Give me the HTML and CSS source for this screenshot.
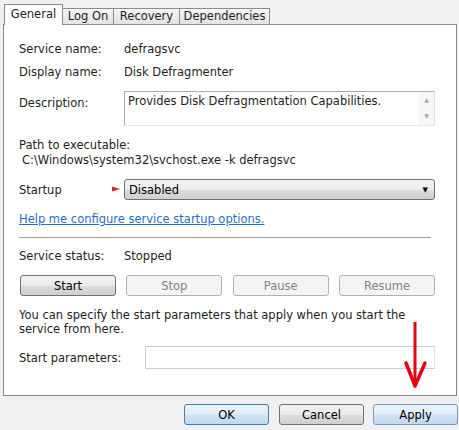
FILE: index.html
```html
<!DOCTYPE html>
<html lang="en">
<head>
  <meta charset="UTF-8">
  <title>Disk Defragmenter Properties</title>
  <link rel="stylesheet" href="styles.css">
</head>
<body>
  <div class="dialog">
    <div class="tabs">
      <span class="tab active">General</span>
      <span class="tab tabLogOn">Log On</span>
      <span class="tab tabRecovery">Recovery</span>
      <span class="tab tabDeps">Dependencies</span>
    </div>

    <div class="panel">
      <div class="row"><span class="label">Service name:</span><span>defragsvc</span></div>
      <div class="row gap9"><span class="label">Display name:</span><span>Disk Defragmenter</span></div>
      <div class="row descRow">
        <span class="label descLabel">Description:</span>
        <div class="descBox">
          <span class="descText">Provides Disk Defragmentation Capabilities.</span>
          <div class="scroll"><span>&#9650;</span><span>&#9660;</span></div>
        </div>
      </div>
      <div class="pathLabel">Path to executable:</div>
      <div class="pathValue">C:\Windows\system32\svchost.exe -k defragsvc</div>
      <div class="row startupRow">
        <span class="label">Startup</span>
        <div class="select"><span>Disabled</span><span class="caret">&#9660;</span></div>
      </div>
      <a class="link" href="#">Help me configure service startup options.</a>
      <div class="rule"></div>
      <div class="row statusRow"><span class="label">Service status:</span><span>Stopped</span></div>
      <div class="actions">
        <button class="btn">Start</button>
        <button class="btn" disabled>Stop</button>
        <button class="btn" disabled>Pause</button>
        <button class="btn" disabled>Resume</button>
      </div>
      <p class="note">You can specify the start parameters that apply when you start the service from here.</p>
      <div class="row paramRow">
        <span class="label paramLabel">Start parameters:</span>
        <div class="paramInput"></div>
      </div>
    </div>

    <div class="footer">
      <button class="btn btnBlue okBtn">OK</button>
      <button class="btn">Cancel</button>
      <button class="btn btnBlue applyBtn">Apply</button>
    </div>

    <!-- red annotation arrows drawn over the screenshot -->
    <svg class="arrows" width="459" height="430" viewBox="0 0 459 430">
      <defs>
        <linearGradient id="fade" x1="0" x2="1" y1="0" y2="0">
          <stop offset="0" stop-color="#f08a95"/>
          <stop offset="1" stop-color="#e51e30"/>
        </linearGradient>
      </defs>
      <line x1="97" y1="189" x2="116" y2="189" stroke="url(#fade)" stroke-width="1.6"/>
      <path d="M112 186.5 L120 189 L112 191.5 Z" fill="#e51e30"/>
      <line x1="415" y1="322" x2="415" y2="382" stroke="#e30613" stroke-width="3"/>
      <path d="M406 363 L415 386 L425 363" fill="none" stroke="#e30613" stroke-width="3.5" stroke-linejoin="round" stroke-linecap="round"/>
    </svg>
  </div>
</body>
</html>
```

FILE: styles.css
```css
body {
  margin: 0;
  background: #f0f0f0;
  font: 11.5px "DejaVu Sans", sans-serif;
  color: #1e1e1e;
}
.dialog {
  position: relative;
  width: 459px;
  height: 430px;
  overflow: hidden;
}
.tabs {
  display: flex;
  align-items: flex-end;
  height: 24px;
  padding-left: 4px;
}
.tab {
  box-sizing: border-box;
  height: 16px;
  line-height: 15px;
  text-align: center;
  border: 1px solid #898c95;
  border-left: none;
  border-bottom: none;
  background: linear-gradient(#f5f5f5, #e3e3e3);
}
.tab.active {
  position: relative;
  z-index: 1;
  width: 59px;
  height: 21px;
  line-height: 18px;
  margin-bottom: -1px;
  border-left: 1px solid #898c95;
  background: #fff;
}
.tabLogOn { width: 51px; }
.tabRecovery { width: 66px; }
.tabDeps { width: 90px; }

.panel {
  box-sizing: border-box;
  width: 454px;
  height: 372px;
  margin-left: 3px;
  padding: 17px 0 0 15px;
  border: 1px solid #898c95;
  background: #fff;
  line-height: 14px;
}
.row {
  display: flex;
  align-items: center;
}
.label {
  width: 105px;
  flex: none;
}
.gap9 { margin-top: 9px; }
.descRow {
  margin-top: 12px;
  align-items: flex-start;
}
.descLabel { padding-top: 5px; }
.descBox {
  box-sizing: border-box;
  display: flex;
  justify-content: space-between;
  width: 311px;
  height: 35px;
  border: 1px solid #abadb3;
  border-right-color: #dbdfe6;
  border-bottom-color: #e3e9ef;
}
.descText { padding: 2px 0 0 3px; }
.scroll {
  display: flex;
  flex-direction: column;
  justify-content: space-between;
  width: 15px;
  padding: 4px 0 5px;
  background: #f7f7f7;
  color: #a6a6a6;
  font-size: 6px;
  line-height: 8px;
  text-align: center;
}
.pathLabel { margin-top: 12px; }
.pathValue {
  margin-top: 1px;
  padding-left: 3px;
}
.startupRow { margin-top: 12px; }
.select {
  box-sizing: border-box;
  display: flex;
  justify-content: space-between;
  align-items: center;
  width: 311px;
  height: 21px;
  padding: 0 6px 0 4px;
  border: 1px solid #707070;
  border-radius: 3px;
  background: linear-gradient(#f2f2f2 0%, #ebebeb 50%, #dddddd 51%, #cfcfcf 100%);
  color: #000;
}
.caret { font-size: 7px; }
.link {
  display: block;
  width: max-content;
  margin-top: 12px;
  color: #1f6fc5;
}
.rule {
  width: 412px;
  height: 1px;
  margin-top: 11px;
  background: #a0a0a0;
  border-bottom: 1px solid #fff;
}
.statusRow { margin-top: 10px; }
.actions {
  display: flex;
  justify-content: space-between;
  width: 415px;
  margin: 12px 0 0 1px;
}
.btn {
  box-sizing: border-box;
  width: 96px;
  height: 21px;
  padding: 0;
  border: 1px solid #707070;
  border-radius: 3px;
  background: linear-gradient(#f2f2f2 0%, #ebebeb 50%, #dddddd 51%, #cfcfcf 100%);
  font: inherit;
  color: #000;
}
.btn:disabled {
  border-color: #adb2b5;
  background: #f4f4f4;
  color: #838383;
}
.note {
  width: 416px;
  margin: 12px 0 0;
}
.paramRow { margin-top: 10px; }
.paramLabel { width: 126px; }
.paramInput {
  box-sizing: border-box;
  width: 290px;
  height: 23px;
  border: 1px solid #c9cbd0;
  border-right-color: #e1e3e7;
}
.footer {
  display: flex;
  justify-content: flex-end;
  gap: 9px;
  padding: 8px 1px 0 0;
}
.footer .btn { width: 85px; }
.okBtn { margin-right: 1px; }
.btnBlue {
  border-color: #3c7fb1;
  background: linear-gradient(#edf5fb 0%, #dcebf6 50%, #cfe3f2 51%, #c0d9ee 100%);
}
.applyBtn { border-color: #6d9cc0; }
.arrows {
  position: absolute;
  left: 0;
  top: 0;
  pointer-events: none;
}
```
